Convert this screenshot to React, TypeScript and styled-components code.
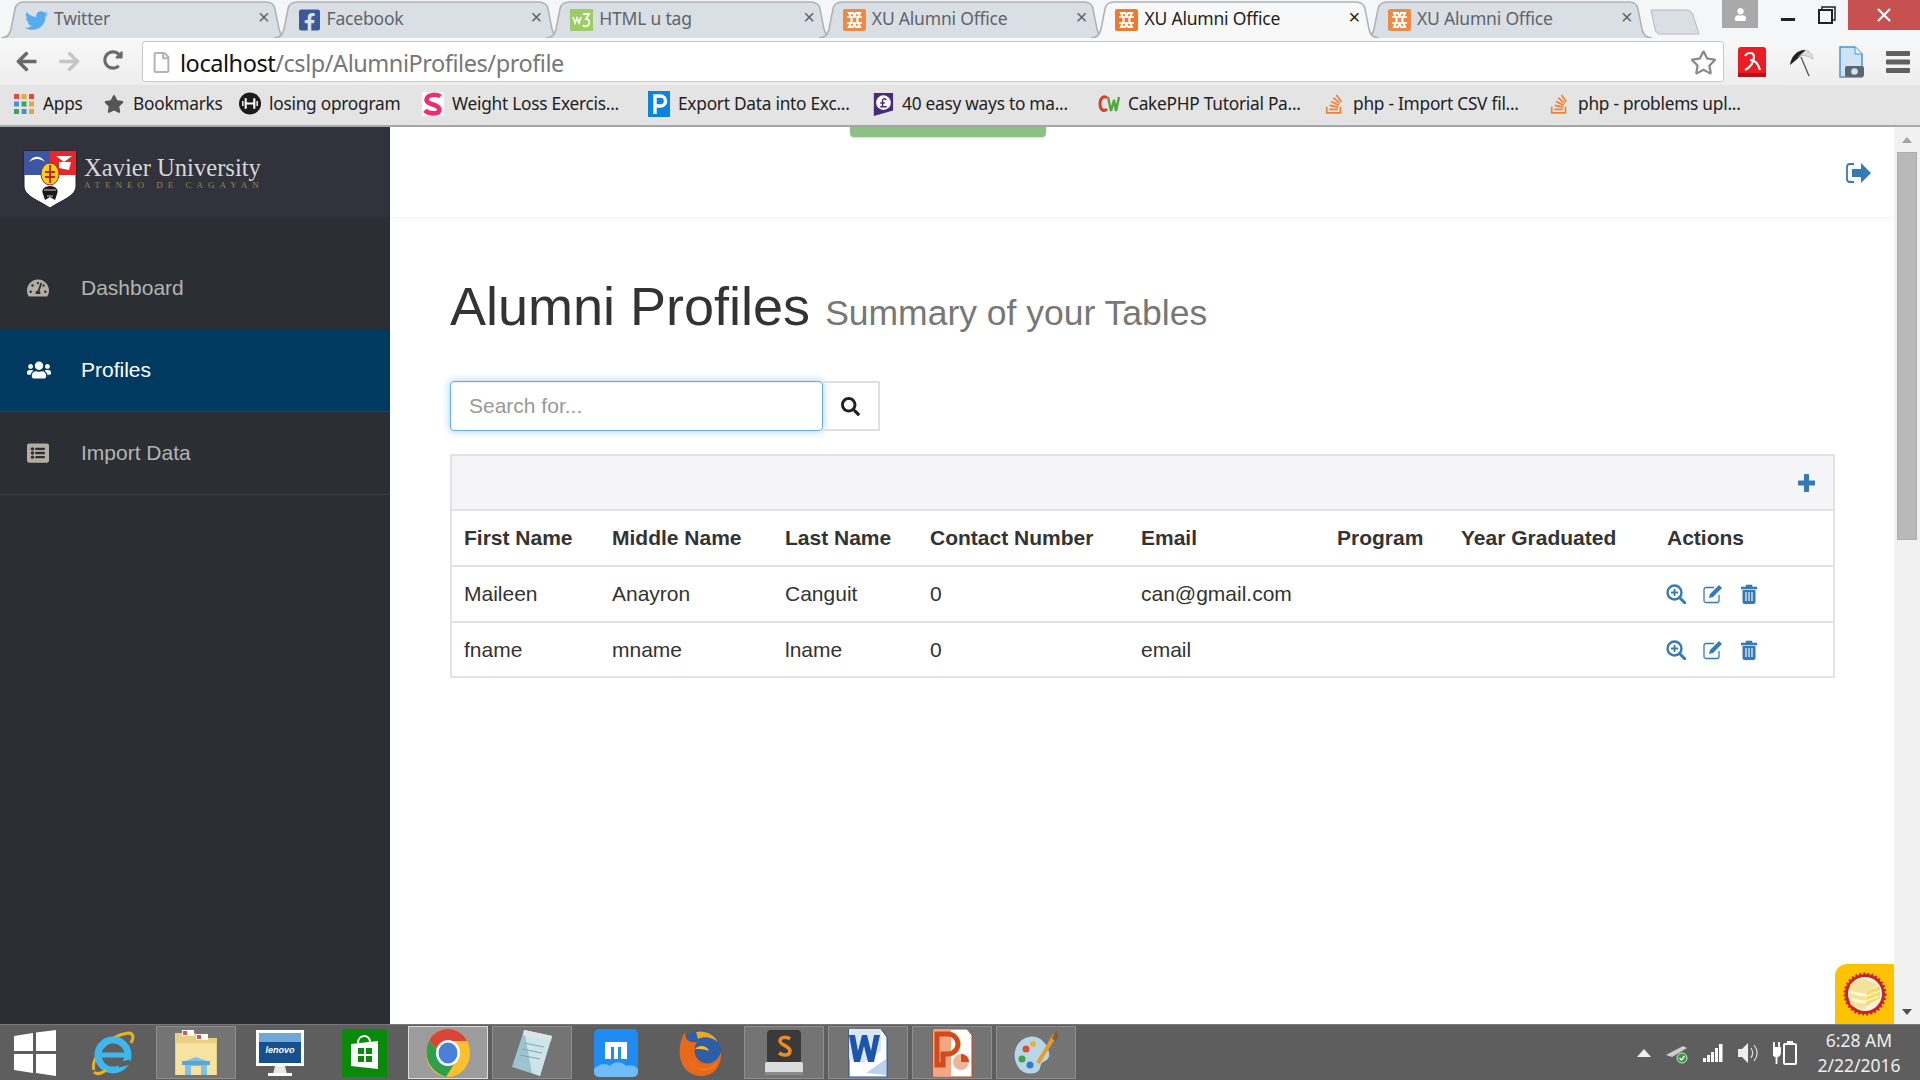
import React, {FC} from 'react';
import styled, {createGlobalStyle} from 'styled-components';
import {
  FaFacebookSquare, FaListAlt, FaSearch, FaStar, FaRegStar, FaStackOverflow,
  FaTachometerAlt, FaTwitter, FaUsers, FaArrowLeft, FaArrowRight, FaRedoAlt, FaRegFile, FaUser,
} from 'react-icons/fa';

const GlobalStyle = createGlobalStyle`
  html, body {
    margin: 0;
    padding: 0;
    width: 1920px;
    height: 1080px;
    overflow: hidden;
    background: #fff;
    font-family: "Liberation Sans", Arial, sans-serif;
  }
  * { box-sizing: border-box; }
`;

const Screen = styled.div`
  position: relative;
  width: 1920px;
  height: 1080px;
  display: flex;
  flex-direction: column;
  overflow: hidden;
`;

/* ---------- browser chrome ---------- */

const TabStrip = styled.div`
  position: relative;
  height: 38px;
  display: flex;
  align-items: flex-end;
  padding-left: 1px;
  background: #f4f6f8;
`;

const TabBox = styled.div<{$active?: boolean}>`
  position: relative;
  flex: none;
  width: 288px;
  height: 37px;
  margin-right: -15.4px;
  z-index: ${p => (p.$active ? 2 : 1)};
  color: ${p => (p.$active ? '#222' : '#5f656c')};
  font: 17.5px "Noto Sans", sans-serif;
`;

const TabShape = styled.svg`
  position: absolute;
  inset: 0;
`;

const TabIcon = styled.span`
  position: absolute;
  left: 24px;
  top: 8px;
  width: 23px;
  height: 22px;
  display: flex;
  align-items: center;
  justify-content: center;
`;

const TabTitle = styled.span`
  position: absolute;
  left: 53px;
  top: 5px;
  letter-spacing: -0.2px;
  white-space: nowrap;
`;

const TabClose = styled.span`
  position: absolute;
  left: 257px;
  top: 5px;
  font: 20px "Liberation Sans", sans-serif;
`;

const NewTab = styled.svg`
  flex: none;
  margin-left: 13px;
  margin-bottom: 3px;
`;

const WindowControls = styled.div`
  margin-left: auto;
  align-self: flex-start;
  display: flex;
  height: 30px;
`;

const UserBox = styled.div`
  width: 36px;
  height: 28px;
  margin-right: 12px;
  background: #a9a9a9;
  color: #fff;
  display: flex;
  align-items: center;
  justify-content: center;
`;

const WinButton = styled.div<{$w: number; $close?: boolean}>`
  width: ${p => p.$w}px;
  background: ${p => (p.$close ? '#c75050' : 'transparent')};
  display: flex;
  align-items: center;
  justify-content: center;
`;

const Toolbar = styled.div`
  height: 47px;
  display: flex;
  align-items: center;
  background: linear-gradient(#f8f8f8, #eeeeee);
  position: relative;
`;

const NavButton = styled.span<{$dim?: boolean}>`
  flex: none;
  width: 43px;
  display: flex;
  justify-content: center;
  color: ${p => (p.$dim ? '#c6c6c6' : '#6a6a6a')};
`;

const NavGroup = styled.div`
  flex: none;
  width: 142px;
  padding-left: 5px;
  display: flex;
`;

const AddressBar = styled.div`
  flex: none;
  width: 1582px;
  height: 41px;
  display: flex;
  align-items: center;
  padding: 2px 6px 0 8px;
  background: #fff;
  border: 1px solid #c8c8c8;
  border-radius: 3px;
  font: 23.5px "Noto Sans", sans-serif;
  letter-spacing: -0.45px;
  color: #777;
`;

const Host = styled.span`
  color: #111;
`;

const PageGlyph = styled.span`
  display: flex;
  color: #b4b4b4;
  margin-right: 8px;
`;

const StarGlyph = styled.span`
  margin-left: auto;
  display: flex;
  color: #8a8a8a;
`;

const ExtGroup = styled.div`
  flex: 1;
  display: flex;
  align-items: center;
  justify-content: space-between;
  padding: 0 10px 0 14px;
`;

const BookmarkBar = styled.div`
  height: 42px;
  display: flex;
  align-items: center;
  padding: 0 0 3px 13px;
  background: #e4e4e4;
  border-bottom: 2px solid #a8a8a8;
  font: 17.3px "Noto Sans", sans-serif;
  letter-spacing: -0.25px;
  color: #222;
`;

const Bookmark = styled.div<{$w: number}>`
  flex: none;
  width: ${p => p.$w}px;
  display: flex;
  align-items: center;
  gap: 8px;
  white-space: nowrap;
`;

const BmIcon = styled.span`
  flex: none;
  width: 22px;
  height: 24px;
  display: flex;
  align-items: center;
  justify-content: center;
`;

/* ---------- page ---------- */

const Viewport = styled.div`
  flex: 1;
  min-height: 0;
  display: flex;
`;

const Sidebar = styled.nav`
  flex: none;
  width: 390px;
  background: #2b2e33;
  display: flex;
  flex-direction: column;
`;

const Brand = styled.div`
  height: 90px;
  background: #31323b;
  display: flex;
  align-items: center;
  padding: 15px 0 0 23px;
  gap: 7px;
`;

const BrandText = styled.div`
  display: flex;
  flex-direction: column;
  margin-top: -14px;
`;

const BrandName = styled.div`
  font: 24.6px/25px "Liberation Serif", serif;
  color: #d8d8d8;
  white-space: nowrap;
`;

const BrandSub = styled.div`
  font: 9px/10px "Liberation Serif", serif;
  letter-spacing: 5px;
  color: #9a8340;
  white-space: nowrap;
`;

const Menu = styled.div`
  margin-top: 30px;
  display: flex;
  flex-direction: column;
`;

const MenuItem = styled.div<{$active?: boolean}>`
  height: 83px;
  margin-top: ${p => (p.$active ? '-1px' : '0')};
  display: flex;
  align-items: center;
  padding-left: 27px;
  font-size: 21px;
  color: ${p => (p.$active ? '#fff' : '#b4b4b4')};
  background: ${p => (p.$active ? '#003a60' : 'transparent')};
  border-bottom: 1px solid #3a3d42;
`;

const MenuIcon = styled.span<{$active?: boolean}>`
  width: 54px;
  display: flex;
  color: ${p => (p.$active ? '#fff' : '#b3aea3')};
`;

const Main = styled.main`
  flex: 1;
  min-width: 0;
  display: flex;
  flex-direction: column;
`;

const TopBar = styled.header`
  flex: none;
  height: 90px;
  display: flex;
  align-items: center;
  justify-content: flex-end;
  padding: 2px 23px 0 0;
  color: #337ab7;
  box-shadow: 0 2px 5px rgba(0, 0, 0, 0.05);
`;

const Content = styled.section`
  padding: 57px 59px 0 60px;
`;

const Title = styled.h1`
  margin: 0;
  font-size: 54px;
  line-height: 64px;
  font-weight: 400;
  color: #333;
  white-space: nowrap;
`;

const Subtitle = styled.small`
  margin-left: 15px;
  font-size: 35.5px;
  color: #777;
`;

const SearchRow = styled.div`
  margin-top: 36px;
  display: flex;
  width: 430px;
  height: 50px;
`;

const SearchInput = styled.input`
  flex: none;
  width: 373px;
  height: 50px;
  padding: 0 18px;
  border: 1px solid #66afe9;
  border-radius: 4px;
  outline: none;
  font: 21px "Liberation Sans", sans-serif;
  color: #555;
  box-shadow: inset 0 1px 1px rgba(0, 0, 0, 0.07), 0 0 8px rgba(102, 175, 233, 0.6);
  &::placeholder { color: #999; }
`;

const SearchButton = styled.div`
  flex: 1;
  display: flex;
  align-items: center;
  justify-content: center;
  border: 2px solid #e0e0e0;
  border-left: none;
  color: #222;
`;

const Panel = styled.div`
  margin-top: 23px;
  border: 2px solid #e2e2e2;
`;

const PanelBar = styled.div`
  height: 55px;
  display: flex;
  align-items: center;
  justify-content: flex-end;
  padding-right: 18px;
  background: #f5f5f7;
  border-bottom: 2px solid #e2e2e2;
  color: #337ab7;
`;

const Table = styled.table`
  width: 100%;
  table-layout: fixed;
  border-collapse: collapse;
  font-size: 21px;
  color: #333;
`;

const HeadCell = styled.th`
  height: 55px;
  padding: 0 0 0 12px;
  text-align: left;
  font-weight: 700;
  white-space: nowrap;
  border-bottom: 2px solid #e2e2e2;
`;

const Cell = styled.td`
  height: 56px;
  padding: 0 0 0 12px;
  white-space: nowrap;
  border-bottom: 2px solid #e2e2e2;
  tr:last-child > & { border-bottom: none; height: 54px; }
`;

const Actions = styled.div`
  display: flex;
  align-items: center;
  gap: 17px;
  margin-left: -1px;
  color: #337ab7;
`;

const ScrollTrack = styled.div`
  flex: none;
  width: 26px;
  background: #f1f1f1;
  display: flex;
  flex-direction: column;
  align-items: center;
`;

const ScrollArrow = styled.div<{$down?: boolean}>`
  flex: none;
  height: 25px;
  display: flex;
  align-items: center;
  justify-content: center;
  margin-top: ${p => (p.$down ? 'auto' : 0)};
  &::after {
    content: '';
    border-left: 5px solid transparent;
    border-right: 5px solid transparent;
    ${p => (p.$down ? 'border-top: 6px solid #505050;' : 'border-bottom: 6px solid #a3a3a3;')}
  }
`;

const ScrollThumb = styled.div`
  flex: none;
  width: 20px;
  height: 388px;
  background: #b9b9b9;
  border: 1px solid #adadad;
`;

const Notice = styled.div`
  position: absolute;
  left: 850px;
  top: 127px;
  width: 196px;
  height: 10px;
  background: #8cc084;
  border-radius: 0 0 4px 4px;
  box-shadow: 0 1px 2px rgba(0, 0, 0, 0.15);
`;

const CakeBadge = styled.div`
  position: absolute;
  left: 1835px;
  top: 964px;
  width: 59px;
  height: 60px;
  background: #fdc300;
  border-radius: 12px 0 0 0;
  display: flex;
  align-items: center;
  justify-content: center;
`;

/* ---------- taskbar ---------- */

const Taskbar = styled.footer`
  flex: none;
  height: 56px;
  display: flex;
  align-items: stretch;
  background: #5e5e5e;
  border-top: 1px solid #777;
`;

const StartCell = styled.div`
  flex: none;
  width: 70px;
  display: flex;
  align-items: center;
  justify-content: center;
`;

const TaskCell = styled.div`
  flex: none;
  width: 84px;
  padding: 1px 2px;
  display: flex;
`;

const TaskInner = styled.div<{$state?: 'open' | 'active'}>`
  flex: 1;
  display: flex;
  align-items: center;
  justify-content: center;
  background: ${p => (p.$state === 'active' ? '#9c9c9c' : p.$state === 'open' ? '#747474' : 'transparent')};
  border: 1px solid ${p => (p.$state === 'active' ? '#dcdcdc' : p.$state === 'open' ? '#8e8e8e' : 'transparent')};
`;

const Tray = styled.div`
  margin-left: auto;
  display: flex;
  align-items: center;
  gap: 14px;
  padding-right: 16px;
`;

const Clock = styled.div`
  width: 90px;
  margin-left: 3px;
  text-align: center;
  color: #eee;
  font: 17.5px/25px "Noto Sans", sans-serif;
`;

/* ---------- drawings ---------- */

const XamppIcon: FC<{muted?: boolean}> = ({muted}) => (
  <svg width="23" height="22" viewBox="0 0 23 22">
    <rect width="23" height="22" rx="2" fill={muted ? '#ef8a45' : '#ee7b2c'} />
    <path d="M6 4h4l1.5 3L13 4h4l-3 7 3 7h-4l-1.5-3L10 18H6l3-7z" fill="none" stroke="#fff" strokeWidth="2" />
    <path d="M4 8h15M4 14h15" stroke="#fff" strokeWidth="1.5" />
  </svg>
);

const W3Icon = () => (
  <svg width="23" height="22" viewBox="0 0 23 22">
    <rect width="23" height="22" rx="1" fill="#9ccc65" />
    <path d="M3 8l2 6 2-5 2 5 2-6" fill="none" stroke="#fff" strokeWidth="1.6" />
    <path d="M13 5h6l-3 5c3 0 4 2 3 5s-5 3-6 1" fill="none" stroke="#fff" strokeWidth="1.8" />
  </svg>
);

const AppsIcon = () => (
  <svg width="20" height="20" viewBox="0 0 20 20">
    {['#e8453c', '#e8a33c', '#e8453c', '#4a90d9', '#3aa655', '#e8a33c', '#3aa655', '#4a90d9', '#e8a33c'].map((c, i) => (
      <rect key={i} x={(i % 3) * 7.5} y={Math.floor(i / 3) * 7.5} width="5" height="5" fill={c} />
    ))}
  </svg>
);

const HCircle = () => (
  <svg width="23" height="23" viewBox="0 0 23 23">
    <circle cx="11.5" cy="11.5" r="11.5" fill="#1c1c1c" />
    <path d="M7 6v11M16 6v11M7 11.5h9" stroke="#fff" strokeWidth="2.2" />
    <path d="M4 9v5M19 9v5" stroke="#fff" strokeWidth="1.5" />
  </svg>
);

const PinkS = () => (
  <svg width="24" height="26" viewBox="0 0 24 26">
    <rect width="24" height="26" fill="#fff" />
    <path d="M20 5c-3-3-14-3-15 3s14 5 14 11-12 5-16 1" fill="none" stroke="#ec2d72" strokeWidth="5" />
  </svg>
);

const BlueP = () => (
  <svg width="22" height="26" viewBox="0 0 22 26">
    <rect width="22" height="26" fill="#0a84e0" />
    <path d="M7 23V5h5.5a5 5 0 0 1 0 10H7" fill="none" stroke="#fff" strokeWidth="3.4" />
  </svg>
);

const PoundBadge = () => (
  <svg width="24" height="26" viewBox="0 0 24 26">
    <path d="M2 1h21v19L2 26z" fill="#4b2a7c" />
    <circle cx="12.5" cy="11.5" r="8" fill="#fff" />
    <path d="M15.5 8.5c-1-2-4-1.500-4 1v6M9 12h5M9 16h7" fill="none" stroke="#4b2a7c" strokeWidth="1.6" />
  </svg>
);

const CwIcon = () => (
  <svg width="22" height="20" viewBox="0 0 22 20">
    <path d="M9 4c-3-3-7 0-7 6s4 8 7 5" fill="none" stroke="#d8402b" strokeWidth="3" />
    <path d="M10 3l3 14 3-11 2 11 3-14" fill="none" stroke="#4fa83d" strokeWidth="2.4" />
  </svg>
);

const AviraIcon = () => (
  <svg width="28" height="30" viewBox="0 0 28 30">
    <rect width="28" height="30" rx="3" fill="#ed1c24" />
    <rect y="26" width="28" height="4" fill="#b3141a" />
    <path d="M7 23c5-2 9-8 9-13 0-3-2-4-4-4s-4 1-5 3M12 13c5 0 8 3 10 10" fill="none" stroke="#fff" strokeWidth="2.2" />
  </svg>
);

const UmbrellaIcon = () => (
  <svg width="30" height="30" viewBox="0 0 30 30">
    <path d="M4 18C5 9 12 2 20 3 16 7 11 13 4 18z" fill="#222" />
    <path d="M20 3c4 1 7 5 7 9-5-3-11-5-15-2z" fill="#ddd" stroke="#999" strokeWidth=".5" />
    <path d="M15 10l8 19" stroke="#555" strokeWidth="1.3" />
  </svg>
);

const CaptureIcon = () => (
  <svg width="30" height="32" viewBox="0 0 30 32">
    <path d="M4 1h15l7 7v23H4z" fill="#cfe3f6" stroke="#4f92d2" strokeWidth="1.500" />
    <path d="M19 1v7h7" fill="#eaf3fb" stroke="#4f92d2" />
    <rect x="9" y="20" width="19" height="11" rx="2" fill="#5b6670" />
    <circle cx="18.500" cy="25.500" r="3.300" fill="#cfe3f6" />
  </svg>
);

const MenuGlyph = () => (
  <svg width="24" height="22" viewBox="0 0 24 22">
    <rect width="24" height="5" y="0" rx="1" fill="#606060" />
    <rect width="24" height="5" y="8.500" rx="1" fill="#606060" />
    <rect width="24" height="5" y="17" rx="1" fill="#606060" />
  </svg>
);

const Shield = () => (
  <svg width="54" height="59" viewBox="0 0 54 59">
    <path d="M1 1h52v35c0 10-14 14-26 22C15 50 1 46 1 36z" fill="#fff" stroke="#222" strokeWidth="1" />
    <rect x="1" y="1" width="26" height="24" fill="#3c56a5" />
    <rect x="27" y="1" width="26" height="24" fill="#e8262b" />
    <path d="M6 12c4-7 12-7 16 0-5-4-11-4-16 0z" fill="#fff" />
    <path d="M33 6h16l-8 6zM36 12h12l-2 8-10-2z" fill="#fff" />
    <ellipse cx="27" cy="24" rx="9" ry="11" fill="#f6d20f" stroke="#b31f22" />
    <path d="M27 15v18M22 22h10M22 27h10" stroke="#c8202a" strokeWidth="2" />
    <path d="M27 36c6 0 9 4 7 8l-2 6-5-3-5 3-2-6c-2-4 1-8 7-8z" fill="#1a1a1a" />
    <path d="M21 40h12M24 46h6" stroke="#fff" strokeWidth=".8" />
  </svg>
);

const PlusIcon = () => (
  <svg width="17" height="18" viewBox="0 0 17 18">
    <path d="M8.500 1.500v15M1 9h15" stroke="currentColor" strokeWidth="5" strokeLinecap="round" />
  </svg>
);

const ZoomInIcon = () => (
  <svg width="20" height="20" viewBox="0 0 20 20">
    <circle cx="8.500" cy="8.500" r="7" fill="none" stroke="currentColor" strokeWidth="2.400" />
    <path d="M13.500 13.500L19 19" stroke="currentColor" strokeWidth="3" strokeLinecap="round" />
    <path d="M8.500 5v7M5 8.500h7" stroke="currentColor" strokeWidth="1.800" />
  </svg>
);

const EditIcon = () => (
  <svg width="21" height="20" viewBox="0 0 21 20">
    <path d="M16 11v5.500a2 2 0 0 1-2 2H3a2 2 0 0 1-2-2V5.500a2 2 0 0 1 2-2h8" fill="none" stroke="currentColor" strokeWidth="1.300" />
    <path d="M6 14l1-4L16 1l3 3-9 9z" fill="currentColor" />
  </svg>
);

const TrashIcon = () => (
  <svg width="16" height="20" viewBox="0 0 16 20">
    <path d="M0 3h16v2H0zM5 3V1h6v2" fill="currentColor" stroke="currentColor" strokeWidth=".6" />
    <path d="M1.500 6h13v12a2 2 0 0 1-2 2h-9a2 2 0 0 1-2-2z" fill="currentColor" />
    <path d="M5 8v9M8 8v9M11 8v9" stroke="#fff" strokeWidth="1.100" />
  </svg>
);

const LogoutIcon = () => (
  <svg width="25" height="20" viewBox="0 0 25 20">
    <path d="M8 1H4a3 3 0 0 0-3 3v12a3 3 0 0 0 3 3h4" fill="none" stroke="currentColor" strokeWidth="1.800" />
    <path d="M6 6h9V0l10 10-10 10v-6H6z" fill="currentColor" />
  </svg>
);

const CakeIcon = () => (
  <svg width="46" height="46" viewBox="0 0 46 46">
    <circle cx="23" cy="23" r="20" fill="#c8242c" stroke="#c8242c" strokeWidth="3" strokeDasharray="2 2" />
    <circle cx="23" cy="23" r="17" fill="#f8f3dc" />
    <path d="M8 14c3-4 9-6 15-6l13 6-11 6-1 18c-8 0-16-3-16-6z" fill="#f3e29a" />
    <path d="M8 20c5 3 10 4 16 4M8 27c5 3 10 4 16 4" stroke="#fff8d8" strokeWidth="3" fill="none" />
    <path d="M25 20l13-5v12l-14 8z" fill="#f7d968" />
    <path d="M24.500 25l13-5M24 30l13-5" stroke="#fff3c0" strokeWidth="1.500" />
  </svg>
);

const WindowsLogo = () => (
  <svg width="42" height="46" viewBox="0 0 42 46">
    <path d="M0 6l19-3v18H0zM22 2.500L42 0v21H22zM0 24h19v19L0 40zM22 24h20v22l-20-3z" fill="#fff" />
  </svg>
);

const IeIcon = () => (
  <svg width="48" height="46" viewBox="0 0 48 46">
    <path d="M6 40C2 30 18 6 40 3c6 0 6 5 3 10" fill="none" stroke="#e6b422" strokeWidth="3" />
    <circle cx="25" cy="25" r="15" fill="none" stroke="#3db8ef" strokeWidth="7" />
    <path d="M12 25h28" stroke="#3db8ef" strokeWidth="5" />
    <path d="M30 35l12-3" stroke="#5e5e5e" strokeWidth="5" />
    <path d="M6 42c3 3 8 1 12-2" fill="none" stroke="#e6b422" strokeWidth="3" />
  </svg>
);

const FolderIcon = () => (
  <svg width="48" height="48" viewBox="0 0 48 48">
    <path d="M3 4h20l4 5h18v37H3z" fill="#e9cf81" />
    <path d="M10 1h12v6H10zM24 5h12v6H24z" fill="#fff" />
    <path d="M11 2h4v4h-4zM25 6h4v4h-4z" fill="#d9534f" />
    <path d="M4 14h40v32H4z" fill="#f7e3a1" />
    <path d="M13 46V32l11-4 11 4v14h-6V37H19v9z" fill="#7fc0e6" />
    <path d="M10 32h28v4H10z" fill="#5aa5d6" />
  </svg>
);

const LenovoIcon = () => (
  <svg width="50" height="48" viewBox="0 0 50 48">
    <rect x="1" y="1" width="48" height="36" fill="#fff" />
    <rect x="4" y="4" width="42" height="30" fill="#17508f" />
    <rect x="4" y="4" width="42" height="9" fill="#6ea8d8" />
    <text x="25" y="24" textAnchor="middle" fill="#fff" fontSize="9" fontStyle="italic" fontWeight="700" fontFamily="Liberation Sans">lenovo</text>
    <path d="M20 37h10l2 8H18z" fill="#e8e8e8" />
    <rect x="13" y="44" width="24" height="3" fill="#fff" />
  </svg>
);

const StoreIcon = () => (
  <svg width="45" height="48" viewBox="0 0 45 48">
    <rect width="45" height="48" fill="#0a8a0a" />
    <path d="M9 15l27-3v28L9 37z" fill="#fff" />
    <path d="M16 14c0-9 12-9 12-1" fill="none" stroke="#fff" strokeWidth="2" />
    <path d="M16 19h6v6h-6zM24 19h6v6h-6zM16 27h6v6h-6zM24 27h6v6h-6z" fill="#0a8a0a" />
  </svg>
);

const ChromeIcon = () => (
  <svg width="44" height="48" viewBox="0 0 44 48">
    <ellipse cx="22" cy="24" rx="22" ry="24" fill="#fbc02d" />
    <path d="M3 12C11-4 33-4 41 12H22a12 12 0 0 0-11 8z" fill="#db4437" />
    <path d="M3 12C-3 24 1 42 20 48l10-16a12 12 0 0 1-19-12z" fill="#2f9e4f" />
    <ellipse cx="22" cy="24" rx="12" ry="13" fill="#fff" />
    <ellipse cx="22" cy="24" rx="9.500" ry="10.500" fill="#4a80d8" />
  </svg>
);

const NotepadIcon = () => (
  <svg width="44" height="48" viewBox="0 0 44 48">
    <path d="M14 1l28 6-12 40L2 38z" fill="#9cc4d0" />
    <path d="M14 1l28 6-12 40-8-3z" fill="#cfe4ea" />
    <path d="M14 1l28 6-1 5L13 6z" fill="#dfe4e6" />
    <path d="M14 14l20 4M12 20l20 4M10 26l20 4" stroke="#7fa6b5" />
  </svg>
);

const MaxthonIcon = () => (
  <svg width="44" height="48" viewBox="0 0 44 48">
    <rect width="44" height="48" rx="5" fill="#1e8cf0" />
    <path d="M11 30V13h22v17h-6V18h-3v12h-4V18h-3v12z" fill="#fff" />
    <path d="M0 40c6-6 12-6 16-3 4-5 12-5 16 0 5-2 9 0 12 3v3a5 5 0 0 1-5 5H5a5 5 0 0 1-5-5z" fill="#6fbcf6" />
  </svg>
);

const FirefoxIcon = () => (
  <svg width="44" height="48" viewBox="0 0 44 48">
    <ellipse cx="23" cy="23" rx="20" ry="22" fill="#2d5ea8" />
    <path d="M7 3C-3 18 0 47 24 47c13 0 20-12 19-24-3 9-10 13-17 11-9-2-12-13-7-21C12 14 7 12 7 3z" fill="#e9691b" />
    <path d="M10 30c4 11 20 15 30 3-6 10-22 12-30-3z" fill="#f8a21f" />
    <path d="M18 3c8-2 18 2 22 10-6-5-14-6-20-3z" fill="#f3a51f" />
    <path d="M17 20c5-5 12-3 14 2-5-2-9-2-14-2z" fill="#f7b733" />
  </svg>
);

const SublimeIcon = () => (
  <svg width="44" height="48" viewBox="0 0 44 48">
    <rect x="5" y="1" width="34" height="34" rx="4" fill="#3a3a3a" />
    <rect x="3" y="33" width="38" height="13" rx="2" fill="#dcdcdc" />
    <rect x="3" y="43" width="38" height="3" fill="#8a8a8a" />
    <path d="M28 10c-4-3-10-2-10 2s10 5 10 10-7 5-11 2" fill="none" stroke="#ee8a25" strokeWidth="3.500" />
  </svg>
);

const WordIcon = () => (
  <svg width="44" height="48" viewBox="0 0 44 48">
    <path d="M3 0h32l6 8v40H3z" fill="#fff" stroke="#1d4e9c" strokeWidth="1" />
    <path d="M3 0h32v22l-18 12-14-4z" fill="#dbe6f5" />
    <path d="M3 6l5 27h6l4-16 4 16h6l6-27h-6l-3 16-4-16h-5l-4 16L9 6z" fill="#1d56a8" />
    <path d="M20 44l20-14v16z" fill="#bcd1ec" />
  </svg>
);

const PptIcon = () => (
  <svg width="44" height="48" viewBox="0 0 44 48">
    <path d="M3 0h34l5 6v42H3z" fill="#fff" stroke="#c0451d" strokeWidth="1" />
    <path d="M3 1h18v46H3z" fill="#f2a683" />
    <path d="M7 36V5h11a10 10 0 0 1 0 20h-5v11z" fill="none" stroke="#d24a1a" strokeWidth="5" />
    <circle cx="31" cy="33" r="8" fill="#f0b598" />
    <path d="M31 33V25a8 8 0 0 1 8 8z" fill="#d24a1a" />
  </svg>
);

const PaintIcon = () => (
  <svg width="46" height="48" viewBox="0 0 46 48">
    <path d="M16 8C4 10-2 24 4 36c4 9 14 10 20 7 5-3 2-8 6-10 5-2 8-5 5-13C32 12 24 6 16 8z" fill="#b9d6e6" />
    <circle cx="13" cy="20" r="3.500" fill="#e04a3a" />
    <circle cx="9" cy="30" r="3.500" fill="#3fa34d" />
    <circle cx="20" cy="15" r="3" fill="#e8b23a" />
    <circle cx="17" cy="36" r="3.500" fill="#3b78c8" />
    <path d="M25 34L42 6" stroke="#e89a2a" strokeWidth="4" />
    <path d="M39 9l5-8 1 8-3 3z" fill="#8a5a2b" />
  </svg>
);

/* ---------- data ---------- */

const tabs = [
  {title: 'Twitter', icon: <FaTwitter size={23} color="#55acee" />},
  {title: 'Facebook', icon: <FaFacebookSquare size={24} color="#3b5998" />},
  {title: 'HTML u tag', icon: <W3Icon />},
  {title: 'XU Alumni Office', icon: <XamppIcon muted />},
  {title: 'XU Alumni Office', icon: <XamppIcon />, active: true},
  {title: 'XU Alumni Office', icon: <XamppIcon muted />},
];

const bookmarks = [
  {w: 90, label: 'Apps', icon: <AppsIcon />},
  {w: 136, label: 'Bookmarks', icon: <FaStar size={20} color="#555" />},
  {w: 183, label: 'losing oprogram', icon: <HCircle />},
  {w: 226, label: 'Weight Loss Exercis...', icon: <PinkS />},
  {w: 224, label: 'Export Data into Exc...', icon: <BlueP />},
  {w: 226, label: '40 easy ways to ma...', icon: <PoundBadge />},
  {w: 225, label: 'CakePHP Tutorial Pa...', icon: <CwIcon />},
  {w: 225, label: 'php - Import CSV fil...', icon: <FaStackOverflow size={22} color="#ef8236" />},
  {w: 200, label: 'php - problems upl...', icon: <FaStackOverflow size={22} color="#ef8236" />},
];

const columns = [
  {label: 'First Name', w: 148},
  {label: 'Middle Name', w: 173},
  {label: 'Last Name', w: 145},
  {label: 'Contact Number', w: 211},
  {label: 'Email', w: 196},
  {label: 'Program', w: 124},
  {label: 'Year Graduated', w: 206},
  {label: 'Actions', w: 178},
];

const rows = [
  ['Maileen', 'Anayron', 'Canguit', '0', 'can@gmail.com', '', ''],
  ['fname', 'mname', 'lname', '0', 'email', '', ''],
];

const taskItems: {icon: React.ReactNode; state?: 'open' | 'active'}[] = [
  {icon: <IeIcon />},
  {icon: <FolderIcon />, state: 'open'},
  {icon: <LenovoIcon />},
  {icon: <StoreIcon />},
  {icon: <ChromeIcon />, state: 'active'},
  {icon: <NotepadIcon />, state: 'open'},
  {icon: <MaxthonIcon />},
  {icon: <FirefoxIcon />},
  {icon: <SublimeIcon />, state: 'open'},
  {icon: <WordIcon />, state: 'open'},
  {icon: <PptIcon />, state: 'open'},
  {icon: <PaintIcon />, state: 'open'},
];

const tabPath = 'M0 37C7 37 9 33 10 28L14 8C15 3 18 1 23 1H265C270 1 273 3 274 8L278 28C279 33 281 37 288 37';

const Tab: FC<{title: string; icon: React.ReactNode; active?: boolean}> = ({title, icon, active}) => (
  <TabBox $active={active}>
    <TabShape width="288" height="37" viewBox="0 0 288 37">
      <path d={tabPath} fill={active ? '#f8f8f8' : '#dadee5'} stroke="#aeb2b8" strokeWidth="1.500" />
    </TabShape>
    <TabIcon>{icon}</TabIcon>
    <TabTitle>{title}</TabTitle>
    <TabClose>×</TabClose>
  </TabBox>
);

const App: FC = () => {
  return (
    <Screen>
      <GlobalStyle />
      <TabStrip>
        {tabs.map((t, i) => <Tab key={i} {...t} />)}
        <NewTab width="50" height="26" viewBox="0 0 50 26">
          <path d="M1 1H36C40 1 42 3 43 6L49 25H10C7 25 6 23 5 20z" fill="#dadee5" stroke="#b6bac0" />
        </NewTab>
        <WindowControls>
          <UserBox><FaUser size={13} /></UserBox>
          <WinButton $w={36}>
            <svg width="14" height="14" viewBox="0 0 14 14"><rect y="10" width="14" height="3" fill="#222" /></svg>
          </WinButton>
          <WinButton $w={42}>
            <svg width="18" height="18" viewBox="0 0 18 18">
              <rect x="4" y="1" width="13" height="13" fill="none" stroke="#222" strokeWidth="1.500" />
              <rect x="1" y="4" width="13" height="13" fill="#f4f6f8" stroke="#222" strokeWidth="2" />
            </svg>
          </WinButton>
          <WinButton $w={72} $close>
            <svg width="16" height="16" viewBox="0 0 16 16"><path d="M2 2l12 12M14 2L2 14" stroke="#fff" strokeWidth="2.200" /></svg>
          </WinButton>
        </WindowControls>
      </TabStrip>

      <Toolbar>
        <NavGroup>
          <NavButton><FaArrowLeft size={23} /></NavButton>
          <NavButton $dim><FaArrowRight size={23} /></NavButton>
          <NavButton><FaRedoAlt size={20} /></NavButton>
        </NavGroup>
        <AddressBar>
          <PageGlyph><FaRegFile size={21} /></PageGlyph>
          <Host>localhost</Host>/cslp/AlumniProfiles/profile
          <StarGlyph><FaRegStar size={27} /></StarGlyph>
        </AddressBar>
        <ExtGroup>
          <AviraIcon />
          <UmbrellaIcon />
          <CaptureIcon />
          <MenuGlyph />
        </ExtGroup>
      </Toolbar>

      <BookmarkBar>
        {bookmarks.map(b => (
          <Bookmark key={b.label} $w={b.w}>
            <BmIcon>{b.icon}</BmIcon>
            {b.label}
          </Bookmark>
        ))}
      </BookmarkBar>

      <Viewport>
        <Sidebar>
          <Brand>
            <Shield />
            <BrandText>
              <BrandName>Xavier University</BrandName>
              <BrandSub>ATENEO DE CAGAYAN</BrandSub>
            </BrandText>
          </Brand>
          <Menu>
            <MenuItem><MenuIcon><FaTachometerAlt size={22} /></MenuIcon>Dashboard</MenuItem>
            <MenuItem $active><MenuIcon $active><FaUsers size={24} /></MenuIcon>Profiles</MenuItem>
            <MenuItem><MenuIcon><FaListAlt size={22} /></MenuIcon>Import Data</MenuItem>
          </Menu>
        </Sidebar>

        <Main>
          <TopBar><LogoutIcon /></TopBar>
          <Content>
            <Title>Alumni Profiles<Subtitle>Summary of your Tables</Subtitle></Title>
            <SearchRow>
              <SearchInput placeholder="Search for..." />
              <SearchButton><FaSearch size={19} /></SearchButton>
            </SearchRow>
            <Panel>
              <PanelBar><PlusIcon /></PanelBar>
              <Table>
                <colgroup>
                  {columns.map(c => <col key={c.label} width={c.w} />)}
                </colgroup>
                <thead>
                  <tr>{columns.map(c => <HeadCell key={c.label}>{c.label}</HeadCell>)}</tr>
                </thead>
                <tbody>
                  {rows.map((r, i) => (
                    <tr key={i}>
                      {r.map((v, j) => <Cell key={j}>{v}</Cell>)}
                      <Cell>
                        <Actions>
                          <ZoomInIcon />
                          <EditIcon />
                          <TrashIcon />
                        </Actions>
                      </Cell>
                    </tr>
                  ))}
                </tbody>
              </Table>
            </Panel>
          </Content>
        </Main>

        <ScrollTrack>
          <ScrollArrow />
          <ScrollThumb />
          <ScrollArrow $down />
        </ScrollTrack>
      </Viewport>

      <Taskbar>
        <StartCell><WindowsLogo /></StartCell>
        {taskItems.map((t, i) => (
          <TaskCell key={i}><TaskInner $state={t.state}>{t.icon}</TaskInner></TaskCell>
        ))}
        <Tray>
          <svg width="14" height="8" viewBox="0 0 14 8"><path d="M7 0l7 8H0z" fill="#eee" /></svg>
          <svg width="24" height="22" viewBox="0 0 24 22">
            <path d="M1 13L18 4l4 2-15 9z" fill="#ccc" />
            <circle cx="17" cy="16" r="5" fill="#2e9e3a" stroke="#ddd" />
            <path d="M14.500 16l2 2 3-4" fill="none" stroke="#fff" strokeWidth="1.300" />
          </svg>
          <svg width="20" height="18" viewBox="0 0 20 18"><path d="M0 14h3v4H0zM4 11h3v7H4zM8 8h3v10H8zM12 4h3v14h-3zM16 0h3.500v18H16z" fill="#fff" /></svg>
          <svg width="22" height="22" viewBox="0 0 22 22">
            <path d="M1 7h4l6-6v20l-6-6H1z" fill="#eee" />
            <path d="M14 6c2 3 2 7 0 10M17 3c4 5 4 11 0 16" fill="none" stroke="#ddd" strokeWidth="1.200" />
          </svg>
          <svg width="24" height="24" viewBox="0 0 24 24">
            <path d="M1 1v6M6 1v6M0 7h7v5a3.500 3.500 0 0 1-7 0zM3.500 15v8" stroke="#fff" strokeWidth="1.800" fill="#fff" />
            <rect x="11" y="3" width="12" height="20" rx="1" fill="none" stroke="#fff" strokeWidth="2" />
            <rect x="14" y="0" width="6" height="3" fill="#fff" />
          </svg>
          <Clock>6:28 AM<br />2/22/2016</Clock>
        </Tray>
      </Taskbar>

      <Notice />
      <CakeBadge><CakeIcon /></CakeBadge>
    </Screen>
  );
};

export default App;
